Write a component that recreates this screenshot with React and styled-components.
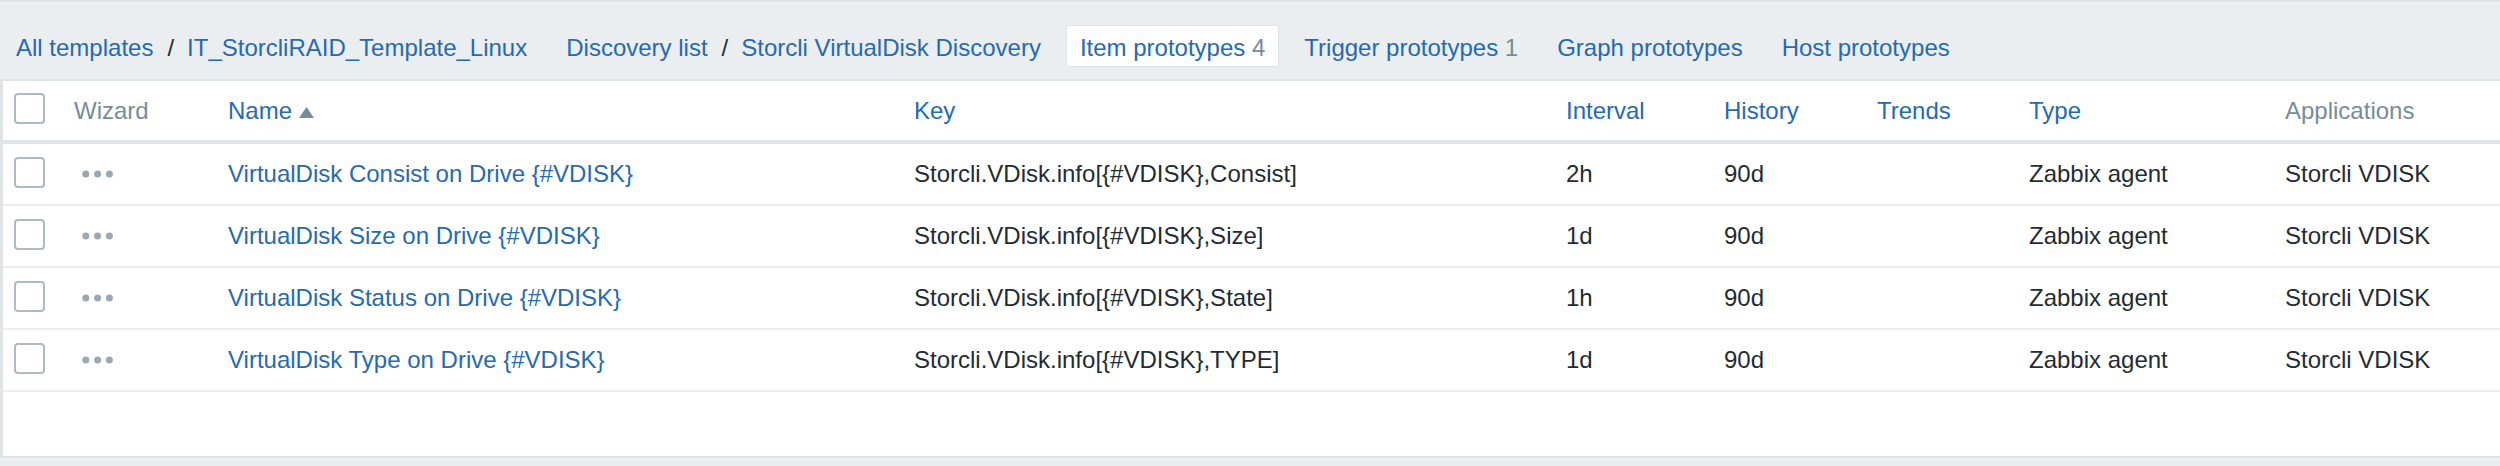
import React from 'react';
import styled, { createGlobalStyle } from 'styled-components';

const GlobalStyle = createGlobalStyle`
  html, body { margin: 0; padding: 0; background: #ebeef0; }
  body {
    font-family: "Liberation Sans", Arial, Helvetica, sans-serif;
    font-size: 24px;
    color: #1f2c33;
  }
`;

const BLUE = '#266aaf';
const GRAY = '#768d99';
const DARK = '#1f2c33';
const COLS = '60px 154px 686px 652px 158px 153px 152px 256px 1fr';

const Page = styled.div`
  display: flex;
  flex-direction: column;
  border-top: 2px solid #dfe4e7;
`;

const Nav = styled.nav`
  display: flex;
  align-items: flex-start;
  gap: 11px;
  height: 77px;
  box-sizing: border-box;
  padding: 23px 0 12px 2px;
`;

const NavItem = styled.div`
  display: flex;
  align-items: center;
  height: 42px;
  box-sizing: border-box;
  padding: 4px 13px 0;
  border-radius: 3px;
  border: 1px solid ${(p) => (p.$active ? '#dfe4e7' : 'transparent')};
  background: ${(p) => (p.$active ? '#ffffff' : 'transparent')};
  white-space: nowrap;
`;

const NavLink = styled.a`
  color: ${BLUE};
  text-decoration: none;
  cursor: pointer;
`;

const Sep = styled.span`
  color: ${DARK};
  margin: 0 13px 0 14px;
`;

const Count = styled.span`
  color: ${GRAY};
`;

const Table = styled.div`
  background: #ffffff;
  border-top: 2px solid #dfe4e7;
  border-left: 3px solid #dfe4e7;
  border-bottom: 2px solid #dfe4e7;
  padding-bottom: 64px;
`;

const HeadRow = styled.div`
  display: grid;
  grid-template-columns: ${COLS};
  align-items: center;
  height: 59px;
  border-bottom: 4px solid #dfe4e7;
`;

const Row = styled.div`
  display: grid;
  grid-template-columns: ${COLS};
  align-items: center;
  height: 60px;
  border-bottom: 2px solid #ebeef0;
`;

const Cell = styled.div`
  display: flex;
  align-items: center;
  padding-left: 11px;
  white-space: nowrap;
  color: ${(p) => (p.$muted ? GRAY : DARK)};
`;

const HeadLink = styled.a`
  display: flex;
  align-items: center;
  color: ${BLUE};
  text-decoration: none;
  cursor: pointer;
`;

const ItemLink = styled.a`
  color: ${BLUE};
  text-decoration: none;
  cursor: pointer;
`;

const Checkbox = styled.span`
  display: inline-block;
  width: 27px;
  height: 27px;
  border: 2px solid #acbbc4;
  border-radius: 4px;
  background: #fff;
  margin-top: -4px;
`;

const Dots = styled.svg`
  margin-left: 8px;
  display: block;
`;

const SortArrow = styled.svg`
  margin-left: 7px;
  margin-top: 4px;
  display: block;
`;

const items = [
  { name: 'VirtualDisk Consist on Drive {#VDISK}', key: 'Storcli.VDisk.info[{#VDISK},Consist]', interval: '2h' },
  { name: 'VirtualDisk Size on Drive {#VDISK}', key: 'Storcli.VDisk.info[{#VDISK},Size]', interval: '1d' },
  { name: 'VirtualDisk Status on Drive {#VDISK}', key: 'Storcli.VDisk.info[{#VDISK},State]', interval: '1h' },
  { name: 'VirtualDisk Type on Drive {#VDISK}', key: 'Storcli.VDisk.info[{#VDISK},TYPE]', interval: '1d' },
];

function MoreIcon() {
  return (
    <Dots width="32" height="8" viewBox="0 0 32 8">
      <circle cx="3.8" cy="4" r="3.5" fill="#9aa8b2" />
      <circle cx="15.6" cy="4" r="3.5" fill="#9aa8b2" />
      <circle cx="27.4" cy="4" r="3.5" fill="#9aa8b2" />
    </Dots>
  );
}

export default function App() {
  return (
    <>
      <GlobalStyle />
      <Page>
        <Nav>
          <NavItem>
            <NavLink>All templates</NavLink>
            <Sep>/</Sep>
            <NavLink>IT_StorcliRAID_Template_Linux</NavLink>
          </NavItem>
          <NavItem>
            <NavLink>Discovery list</NavLink>
            <Sep>/</Sep>
            <NavLink>Storcli VirtualDisk Discovery</NavLink>
          </NavItem>
          <NavItem $active>
            <NavLink>Item prototypes <Count>4</Count></NavLink>
          </NavItem>
          <NavItem>
            <NavLink>Trigger prototypes <Count>1</Count></NavLink>
          </NavItem>
          <NavItem>
            <NavLink>Graph prototypes</NavLink>
          </NavItem>
          <NavItem>
            <NavLink>Host prototypes</NavLink>
          </NavItem>
        </Nav>
        <Table>
          <HeadRow>
            <Cell><Checkbox /></Cell>
            <Cell $muted>Wizard</Cell>
            <Cell>
              <HeadLink>
                Name
                <SortArrow width="15" height="11" viewBox="0 0 15 11">
                  <polygon points="0,11 7.5,0 15,11" fill={GRAY} />
                </SortArrow>
              </HeadLink>
            </Cell>
            <Cell><HeadLink>Key</HeadLink></Cell>
            <Cell><HeadLink>Interval</HeadLink></Cell>
            <Cell><HeadLink>History</HeadLink></Cell>
            <Cell><HeadLink>Trends</HeadLink></Cell>
            <Cell><HeadLink>Type</HeadLink></Cell>
            <Cell $muted>Applications</Cell>
          </HeadRow>
          {items.map((it) => (
            <Row key={it.key}>
              <Cell><Checkbox /></Cell>
              <Cell><MoreIcon /></Cell>
              <Cell><ItemLink>{it.name}</ItemLink></Cell>
              <Cell>{it.key}</Cell>
              <Cell>{it.interval}</Cell>
              <Cell>90d</Cell>
              <Cell></Cell>
              <Cell>Zabbix agent</Cell>
              <Cell>Storcli VDISK</Cell>
            </Row>
          ))}
        </Table>
      </Page>
    </>
  );
}
